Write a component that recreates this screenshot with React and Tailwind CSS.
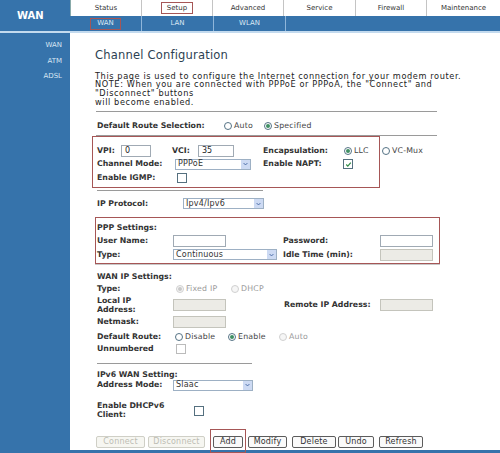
import clsx from "clsx";

const BLUE = "bg-[#3673ab]";

const Radio = ({ checked, disabled }) => (
  <span
    className={clsx(
      "flex items-center justify-center w-[8px] h-[8px] rounded-full border shrink-0",
      disabled ? "border-[#d0d0d0] bg-[#f6f6f6]" : "border-[#557385] bg-white"
    )}
  >
    {checked && (
      <span
        className={clsx(
          "w-[4px] h-[4px] rounded-full",
          disabled ? "bg-[#c8c8c8]" : "bg-[#3f8f63]"
        )}
      />
    )}
  </span>
);

const RadioOpt = ({ label, checked, disabled, className }) => (
  <span className={clsx("flex items-center shrink-0", className)}>
    <Radio checked={checked} disabled={disabled} />
    <span className={clsx("ml-[2px] tracking-[0.2px]", disabled ? "text-[#9a9a9a]" : "text-[#444]")}>{label}</span>
  </span>
);

const Check = ({ checked, className }) => (
  <span
    className={clsx(
      "flex items-center justify-center w-[10px] h-[10px] border border-[#55707f] bg-white shrink-0",
      className
    )}
  >
    {checked && (
      <svg viewBox="0 0 10 10" className="w-[7px] h-[7px]">
        <path d="M1.8 5 L4 7.4 L8.3 2.4" stroke="#2e8a45" strokeWidth="1.7" fill="none" />
      </svg>
    )}
  </span>
);

const Field = ({ value, disabled, className }) => (
  <span
    className={clsx(
      "flex items-center h-[12px] border pl-[3px] text-[8px] shrink-0",
      disabled ? "border-[#c4c4bc] bg-[#ecebe6]" : "border-[#a0aab4] bg-white",
      className
    )}
  >
    {value}
  </span>
);

const Select = ({ value, className }) => (
  <span className={clsx("flex items-center h-[11px] border border-[#9db0c4] bg-white shrink-0", className)}>
    <span className="flex-1 pl-[2px] text-[8px] leading-none text-[#333] tracking-[0.2px]">{value}</span>
    <span className="w-[10px] h-full flex items-center justify-center bg-[#cddaf3] border-l border-white">
      <svg viewBox="0 0 8 6" className="w-[5px] h-[4px]">
        <path d="M1 1.5 L4 4.5 L7 1.5" stroke="#4d6da8" strokeWidth="1.6" fill="none" />
      </svg>
    </span>
  </span>
);

const Btn = ({ children, disabled, className }) => (
  <span
    className={clsx(
      "flex items-center justify-center h-[12px] rounded-[2px] border text-[8px] tracking-[0.2px] shrink-0",
      disabled ? "border-[#cfcfc6] text-[#bdbdb4] bg-[#f6f6f1]" : "border-[#5c5c5c] text-[#333] bg-[#fafafa]",
      className
    )}
  >
    {children}
  </span>
);

const Label = ({ children, className }) => (
  <span className={clsx("font-bold text-[#333] shrink-0", className)}>{children}</span>
);

const tabs = ["Status", "Setup", "Advanced", "Service", "Firewall", "Maintenance"];
const tabW = ["w-[71px]", "w-[71px]", "w-[71px]", "w-[72px]", "w-[71px]", "flex-1"];

export default function App() {
  return (
    <div className="w-[500px] h-[453px] overflow-hidden bg-white flex flex-col font-['DejaVu_Sans',Verdana,sans-serif] text-[#222]">
      {/* header */}
      <div className="flex h-[31px] shrink-0">
        <div className={clsx("w-[70px] text-white font-bold text-[10px] flex items-center pl-[17px]", BLUE)}>WAN</div>
        <div className="flex-1 flex flex-col">
          <div className="h-[16px] flex border-l border-[#8aa]">
            {tabs.map((t, i) => (
              <div
                key={t}
                className={clsx(
                  "flex items-center justify-center text-[7px] text-[#333] border-r border-[#c4c4c4] last:border-r-0",
                  tabW[i]
                )}
              >
                {t === "Setup" ? (
                  <span className="px-[5px] h-[12px] flex items-center border border-[#a65656]">{t}</span>
                ) : (
                  t
                )}
              </div>
            ))}
          </div>
          <div className={clsx("h-[15px] flex text-[7px] text-[#dbe8f4]", BLUE)}>
            <div className="w-[72px] flex items-center justify-center border-r border-[#8fb6da]">
              <span className="px-[6px] h-[12px] flex items-center border border-[#a65656]">WAN</span>
            </div>
            <div className="w-[72px] flex items-center justify-center border-r border-[#8fb6da]">LAN</div>
            <div className="w-[72px] flex items-center justify-center border-r border-[#8fb6da]">WLAN</div>
            <div className="flex-1" />
          </div>
        </div>
      </div>
      <div className="h-[2px] bg-[#c3daee] shrink-0" />

      {/* body */}
      <div className="flex flex-1 min-h-0">
        <div className={clsx("w-[70px] flex flex-col items-end pr-[8px] pt-[8px] gap-[7.5px] text-[7px] leading-[8px] text-[#d8e6f3]", BLUE)}>
          <span>WAN</span>
          <span>ATM</span>
          <span>ADSL</span>
        </div>

        <div className="flex-1 flex flex-col pl-[25px] text-[7.8px]">
          <div className="mt-[15px] h-[14px] leading-[14px] text-[11.5px] tracking-[0.2px] text-[#2d3f52]">Channel Configuration</div>
          <div className="mt-[9.5px] text-[8.2px] leading-[8.7px] tracking-[0.6px] text-[#222] whitespace-nowrap">
            This page is used to configure the Internet connection for your modem router.
            <br />
            NOTE: When you are connected with PPPoE or PPPoA, the "Connect" and
            <br />
            "Disconnect" buttons
            <br />
            will become enabled.
          </div>
          <div className="mt-[4.5px] h-px w-[341px] ml-[1px] bg-[#9a9a9a]" />

          <div className="mt-[7.5px] h-[14px] flex items-center pl-[2px]">
            <Label className="w-[127px]">Default Route Selection:</Label>
            <RadioOpt label="Auto" className="w-[40px]" />
            <RadioOpt label="Specified" checked />
          </div>
          <div className="mt-[1.5px] h-px w-[341px] ml-[1px] bg-[#9a9a9a]" />

          {/* box 1 */}
          <div className="w-[288px] ml-[-3px] border border-[#a65656] pt-[7px] pb-[3px] pl-[4px] whitespace-nowrap">
            <div className="h-[13.5px] flex items-center">
              <span className="w-[75px] flex items-center shrink-0">
                <Label className="w-[24px]">VPI:</Label>
                <Field value="0" className="w-[30px]" />
              </span>
              <span className="w-[91px] flex items-center shrink-0">
                <Label className="w-[26px]">VCI:</Label>
                <Field value="35" className="w-[36px]" />
              </span>
              <Label className="w-[81px]">Encapsulation:</Label>
              <RadioOpt label="LLC" checked className="w-[38px]" />
              <RadioOpt label="VC-Mux" />
            </div>
            <div className="h-[13.5px] flex items-center">
              <Label className="w-[78px]">Channel Mode:</Label>
              <Select value="PPPoE" className="w-[76px]" />
              <span className="w-[12px] shrink-0" />
              <Label className="w-[80px]">Enable NAPT:</Label>
              <Check checked />
            </div>
            <div className="h-[13.5px] flex items-center">
              <Label className="w-[80px]">Enable IGMP:</Label>
              <Check />
            </div>
          </div>
          <div className="mt-[1.5px] h-px w-[166px] ml-[2px] bg-[#9a9a9a]" />

          <div className="mt-[6px] h-[14px] flex items-center pl-[2px]">
            <Label className="w-[86px]">IP Protocol:</Label>
            <Select value="Ipv4/Ipv6" className="w-[81px]" />
          </div>

          {/* box 2 */}
          <div className="mt-[6px] w-[345px] border border-[#a65656] pt-[3px] pb-[1.5px] pl-[1px] shadow-[0_1px_0_#c8c8c8]">
            <div className="h-[13.5px] flex items-center">
              <Label>PPP Settings:</Label>
            </div>
            <div className="h-[13.5px] flex items-center">
              <Label className="w-[76px]">User Name:</Label>
              <Field className="w-[53px]" />
              <span className="w-[57px] shrink-0" />
              <Label className="w-[97px]">Password:</Label>
              <Field className="w-[53px]" />
            </div>
            <div className="h-[13.5px] flex items-center">
              <Label className="w-[76px]">Type:</Label>
              <Select value="Continuous" className="w-[104px]" />
              <span className="w-[6px] shrink-0" />
              <Label className="w-[97px]">Idle Time (min):</Label>
              <Field disabled className="w-[53px]" />
            </div>
          </div>

          {/* WAN IP */}
          <div className="mt-[7px] h-[12px] flex items-center pl-[2px]">
            <Label>WAN IP Settings:</Label>
          </div>
          <div className="h-[12px] flex items-center pl-[2px]">
            <Label className="w-[79px]">Type:</Label>
            <RadioOpt label="Fixed IP" checked disabled className="w-[55px]" />
            <RadioOpt label="DHCP" disabled />
          </div>
          <div className="mt-[1px] h-[19px] flex items-center pl-[2px]">
            <Label className="w-[76px] leading-[9px]">
              Local IP
              <br />
              Address:
            </Label>
            <Field disabled className="w-[53px]" />
            <span className="w-[58px] shrink-0" />
            <Label className="w-[96px]">Remote IP Address:</Label>
            <Field disabled className="w-[53px]" />
          </div>
          <div className="mt-[1px] h-[12px] flex items-center pl-[2px]">
            <Label className="w-[76px]">Netmask:</Label>
            <Field disabled className="w-[53px]" />
          </div>
          <div className="mt-[3px] h-[12px] flex items-center pl-[2px]">
            <Label className="w-[78px]">Default Route:</Label>
            <RadioOpt label="Disable" className="w-[53px]" />
            <RadioOpt label="Enable" checked className="w-[51px]" />
            <RadioOpt label="Auto" disabled />
          </div>
          <div className="h-[12px] flex items-center pl-[2px]">
            <Label className="w-[79px]">Unnumbered</Label>
            <Check className="w-[9px] h-[9px] border-[#bbb]" />
          </div>
          <div className="mt-[8px] h-px w-[155px] ml-[2px] bg-[#9a9a9a]" />

          {/* IPv6 */}
          <div className="mt-[6.5px] h-[10px] flex items-center pl-[2px]">
            <Label>IPv6 WAN Setting:</Label>
          </div>
          <div className="h-[10px] flex items-center pl-[2px]">
            <Label className="w-[76px]">Address Mode:</Label>
            <Select value="Slaac" className="w-[80px]" />
          </div>
          <div className="mt-[12px] flex items-center pl-[2px]">
            <Label className="w-[97px] leading-[8.5px]">
              Enable DHCPv6
              <br />
              Client:
            </Label>
            <Check />
          </div>

          {/* buttons */}
          <div className="mt-[16.5px] flex items-center pl-[1px]">
            <Btn disabled className="w-[49px]">Connect</Btn>
            <Btn disabled className="ml-[3px] w-[57px]">Disconnect</Btn>
            <span className="relative ml-[8px]">
              <Btn className="w-[30px]">Add</Btn>
              <span className="absolute left-[-3px] right-[-3px] top-[-7px] bottom-[-5px] border border-[#a65656]" />
            </span>
            <Btn className="ml-[5px] w-[39px]">Modify</Btn>
            <Btn className="ml-[5px] w-[44px]">Delete</Btn>
            <Btn className="ml-[2px] w-[36px]">Undo</Btn>
            <Btn className="ml-[5px] w-[44px]">Refresh</Btn>
          </div>
          <div className={clsx("mt-auto h-[3px] ml-[-25px] shrink-0", BLUE)} />
        </div>
      </div>
    </div>
  );
}
